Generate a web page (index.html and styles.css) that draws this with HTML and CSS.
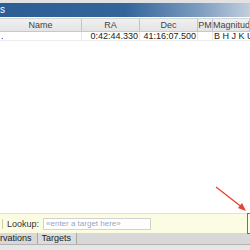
FILE: index.html
```html
<!DOCTYPE html>
<html lang="en">
<head>
    <meta charset="UTF-8">
    <title>Targets</title>
    <link rel="stylesheet" href="styles.css">
</head>
<body>
    <div class="window">
        <div class="top-strip"></div>
        <div class="title-bar"><span class="title">s</span></div>

        <div class="grid-head">
            <div class="cell col-name">Name</div>
            <div class="cell col-ra">RA</div>
            <div class="cell col-dec">Dec</div>
            <div class="cell col-pm">PM</div>
            <div class="cell col-mag">Magnitude</div>
        </div>
        <div class="grid-row">
            <div class="cell col-name left">.</div>
            <div class="cell col-ra right">0:42:44.330</div>
            <div class="cell col-dec right">41:16:07.500</div>
            <div class="cell col-pm"></div>
            <div class="cell col-mag left">B H J K U V</div>
        </div>

        <div class="grid-body"></div>

        <div class="lookup-bar">
            <span class="sep"></span>
            <label class="lookup-label">Lookup:</label>
            <div class="lookup-field">«enter a target here»</div>
            <div class="highlight"></div>
        </div>

        <div class="tabs">
            <div class="tab">rvations</div>
            <div class="tab active">Targets</div>
        </div>
        <div class="status-bar"></div>
    </div>

    <svg class="arrow" width="250" height="250" viewBox="0 0 250 250">
        <line x1="216" y1="187" x2="243" y2="208" stroke="#e8412e" stroke-width="1.3"/>
        <polygon points="246,211 238,208 242,203" fill="#e8412e"/>
    </svg>
</body>
</html>
```

FILE: styles.css
```css
* {
    margin: 0;
    padding: 0;
    box-sizing: border-box;
}

body {
    width: 250px;
    height: 250px;
    overflow: hidden;
    font-family: 'Liberation Sans', Arial, sans-serif;
    font-size: 9px;
    color: #222;
    background: #fff;
    position: relative;
}

.window {
    display: flex;
    flex-direction: column;
    width: 250px;
    height: 250px;
}

.top-strip {
    height: 3px;
    flex: none;
    background: #e2e2e2;
}

.title-bar {
    height: 14px;
    flex: none;
    background: linear-gradient(90deg, #2c5d94 0%, #33659b 50%, #7d9dc0 80%, #c2cfdc 100%);
    color: #fff;
    font-size: 10px;
    line-height: 14px;
}

.grid-head,
.grid-row {
    display: flex;
    flex: none;
    white-space: nowrap;
}

.grid-head {
    height: 14px;
    margin-top: 1px;
    background: linear-gradient(#f0f0f0, #e4e4e4);
    border-top: 1px solid #d4d4d4;
    border-bottom: 1px solid #c8c8c8;
    line-height: 12px;
    color: #444;
}

.grid-head .cell {
    text-align: center;
    border-right: 1px solid #c4c4c4;
}

.grid-row {
    height: 9px;
    line-height: 9px;
    border-bottom: 1px solid #ececec;
}

.grid-row .cell {
    border-right: 1px solid #e6e6e6;
    padding: 0 1px;
}

.cell {
    flex-shrink: 0;
    overflow: hidden;
}

.col-name { width: 82px; }
.col-ra { width: 58px; }
.col-dec { width: 58px; }
.col-pm { width: 15px; }
.col-mag { width: 37px; }

.grid-row .col-mag {
    border-right: none;
}

.left { text-align: left; }
.right { text-align: right; }

.grid-body {
    flex: 1;
    background: #fff;
}

.lookup-bar {
    height: 20px;
    flex: none;
    display: flex;
    align-items: center;
    gap: 4px;
    background: #fcfce2;
    border-top: 1px solid #e4e4c8;
    padding-left: 2px;
    position: relative;
}

.sep {
    width: 1px;
    height: 10px;
    background: #cfcfa8;
}

.lookup-label {
    color: #333;
    font-size: 9px;
}

.lookup-field {
    width: 108px;
    height: 12px;
    background: #fff;
    border: 1px solid #d2d2d2;
    color: #9aa4c4;
    font-size: 8px;
    line-height: 10px;
    padding-left: 2px;
}

.highlight {
    position: absolute;
    left: 247px;
    top: -1px;
    width: 8px;
    height: 21px;
    border: 1px solid #e8412e;
}

.tabs {
    height: 12px;
    flex: none;
    display: flex;
    background: #d8d8d8;
    border-bottom: 1px solid #b4b4b4;
}

.tab {
    line-height: 11px;
    padding: 0 5px 0 0;
    border-right: 1px solid #a8a8a8;
    color: #222;
}

.tab.active {
    padding: 0 5px 0 4px;
    background: #dcdcdc;
}

.status-bar {
    height: 5px;
    flex: none;
    background: #e6e6e6;
}

.arrow {
    position: absolute;
    left: 0;
    top: 0;
    pointer-events: none;
}
```
